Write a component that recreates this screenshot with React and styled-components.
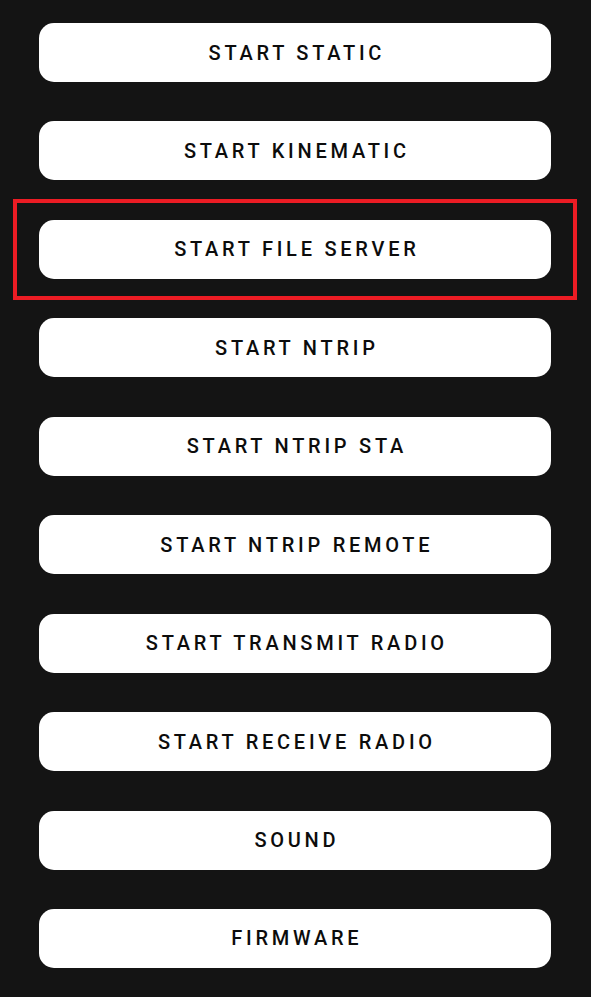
import React from "react";
import styled, { createGlobalStyle } from "styled-components";

const Global = createGlobalStyle`
  html, body { margin: 0; padding: 0; background: #141414; }
  body { font-family: Roboto, "Noto Sans", sans-serif; }
`;

const Page = styled.div`
  width: 591px;
  min-height: 997px;
  box-sizing: border-box;
  background: #141414;
  padding: 23px 40px 0 39px;
  display: flex;
  flex-direction: column;
  gap: 39.44px;
`;

const Button = styled.button`
  position: relative;
  flex: none;
  width: 512px;
  height: 59px;
  border: none;
  border-radius: 15px;
  background: #ffffff;
  color: #0c0c0c;
  font-family: Roboto, "Noto Sans", sans-serif;
  font-weight: 500;
  font-size: 20px;
  letter-spacing: 3.75px;
  text-transform: uppercase;
  display: flex;
  align-items: center;
  justify-content: center;
  padding: 0 0 0 3.75px;
  cursor: pointer;

  ${(p) =>
    p.$highlight &&
    `
    &::after {
      content: "";
      position: absolute;
      top: -21px;
      bottom: -21px;
      left: -26px;
      right: -26px;
      border: 4.5px solid #ec1c24;
      pointer-events: none;
    }
  `}
`;

const items = [
  "START STATIC",
  "START KINEMATIC",
  "START FILE SERVER",
  "START NTRIP",
  "START NTRIP STA",
  "START NTRIP REMOTE",
  "START TRANSMIT RADIO",
  "START RECEIVE RADIO",
  "SOUND",
  "FIRMWARE",
];

export default function App() {
  return (
    <>
      <Global />
      <Page>
        {items.map((label, i) => (
          <Button key={label} $highlight={i === 2}>
            {label}
          </Button>
        ))}
      </Page>
    </>
  );
}
